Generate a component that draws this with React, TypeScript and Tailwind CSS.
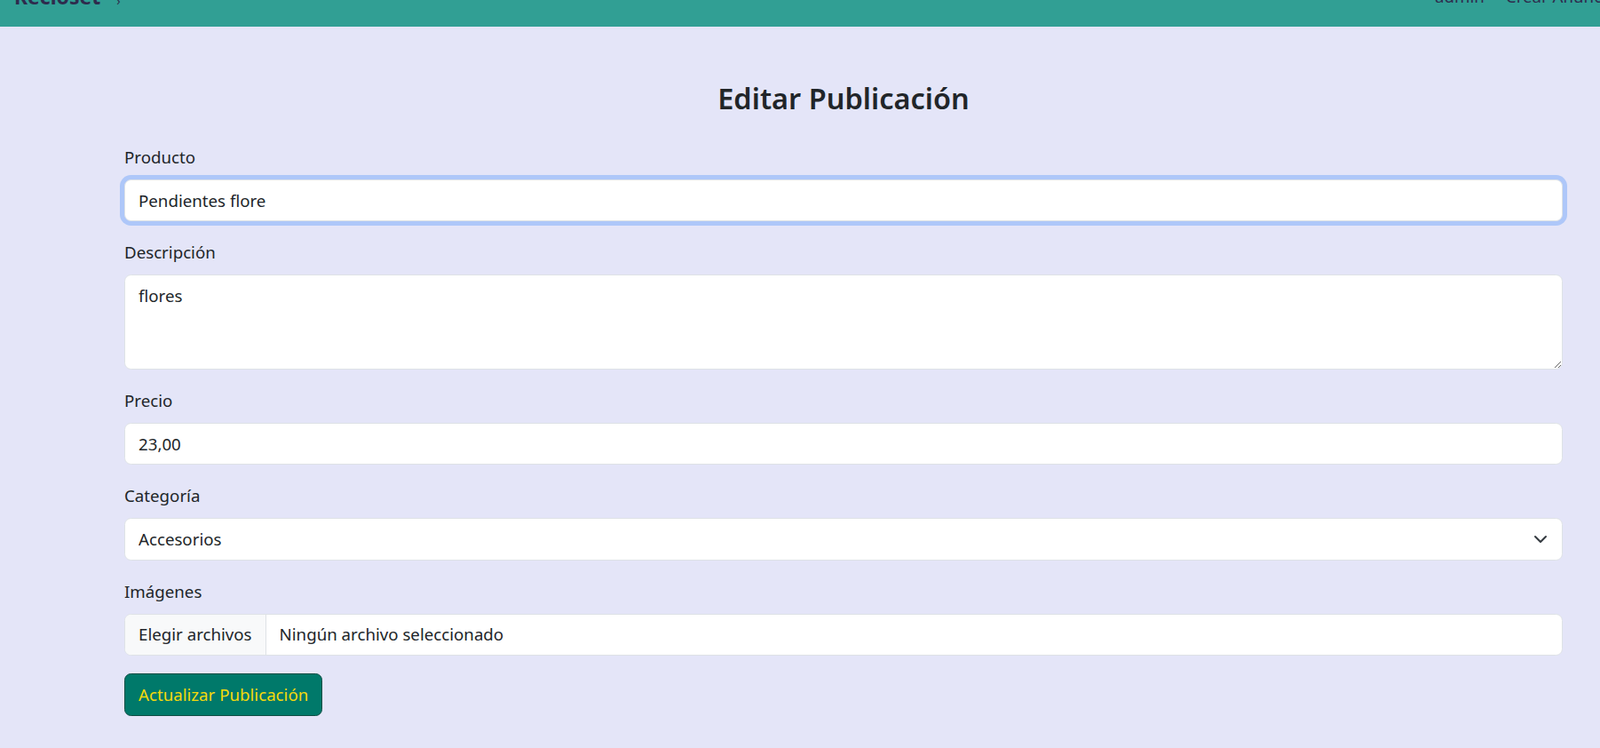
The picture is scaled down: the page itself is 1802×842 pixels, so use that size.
import { useState } from 'react'

const font = { fontFamily: '"Noto Sans", "Open Sans", Arial, sans-serif' }

function Navbar() {
  return (
    <nav className="h-[30px] bg-[#319f94] overflow-hidden relative">
      <div className="flex items-start -mt-[16px] text-[#2e2b4d] whitespace-nowrap">
        <div className="flex items-start shrink-0 w-[1616px] pl-[16px]">
          <span className="text-[23px] leading-[25px] font-bold">Recloset</span>
          <span className="ml-[18px] mt-[10px] text-[14px] leading-[14px]">›</span>
        </div>
        <div className="flex items-start shrink-0 gap-[24px] text-[18.7px] leading-[25px] mt-[-1px]">
          <span>admin</span>
          <span>Crear Anuncio</span>
        </div>
      </div>
    </nav>
  )
}

function Label({ children }: { children: React.ReactNode }) {
  return <label className="block text-[18.7px] leading-[30px] mb-[10px] text-[#212529]">{children}</label>
}

export default function App() {
  const [producto, setProducto] = useState('Pendientes flore')
  const [descripcion, setDescripcion] = useState('flores')
  const [precio, setPrecio] = useState('23,00')
  const [categoria, setCategoria] = useState('Accesorios')

  const inputClass =
    'block w-full h-[47.5px] px-[15px] text-[18.7px] leading-[30px] text-[#212529] bg-white border border-[#dee2e6] rounded-[7.5px] outline-none'

  return (
    <div className="min-h-screen bg-[#e4e5f8]" style={font}>
      <Navbar />
      <div className="pl-[140px] w-[1760px] pt-[60px]">
        <h3 className="text-[32.5px] leading-[42px] font-semibold text-center text-[#212529] mb-[29.5px]">
          Editar Publicación
        </h3>

        <form onSubmit={(e) => e.preventDefault()}>
          <div className="mb-[20px]">
            <Label>Producto</Label>
            <input
              className={inputClass + ' border-[#86b7fe] shadow-[0_0_0_5px_rgba(13,110,253,0.25)]'}
              value={producto}
              onChange={(e) => setProducto(e.target.value)}
            />
          </div>

          <div className="mb-[20px]">
            <Label>Descripción</Label>
            <textarea
              rows={3}
              className="block w-full h-[106.5px] px-[15px] py-[7.5px] text-[18.7px] leading-[30px] text-[#212529] bg-white border border-[#dee2e6] rounded-[7.5px] outline-none"
              value={descripcion}
              onChange={(e) => setDescripcion(e.target.value)}
            />
          </div>

          <div className="mb-[20px]">
            <Label>Precio</Label>
            <input className={inputClass} value={precio} onChange={(e) => setPrecio(e.target.value)} />
          </div>

          <div className="mb-[20px]">
            <Label>Categoría</Label>
            <div className="relative">
              <select
                className={inputClass + ' appearance-none pr-[56px]'}
                value={categoria}
                onChange={(e) => setCategoria(e.target.value)}
              >
                <option>Accesorios</option>
                <option>Ropa</option>
                <option>Calzado</option>
              </select>
              <svg
                className="absolute right-[17px] top-1/2 -translate-y-1/2 pointer-events-none"
                width="16"
                height="12"
                viewBox="0 0 16 12"
                fill="none"
              >
                <path d="M2 3l6 6 6-6" stroke="#343a40" strokeWidth="2" strokeLinecap="round" strokeLinejoin="round" />
              </svg>
            </div>
          </div>

          <div className="mb-[20px]">
            <Label>Imágenes</Label>
            <div className="flex h-[47.5px] bg-white border border-[#dee2e6] rounded-[7.5px] overflow-hidden text-[18.7px] leading-[30px] text-[#212529]">
              <span className="flex items-center px-[15px] bg-[#f8f9fa] border-r border-[#dee2e6]">Elegir archivos</span>
              <span className="flex items-center px-[15px]">Ningún archivo seleccionado</span>
            </div>
          </div>

          <button
            type="submit"
            className="h-[47.5px] px-[15px] text-[18.7px] leading-[30px] bg-[#00796a] text-[#f5d90a] border border-[#0d4d43] rounded-[7.5px]"
          >
            Actualizar Publicación
          </button>
        </form>
      </div>
    </div>
  )
}
